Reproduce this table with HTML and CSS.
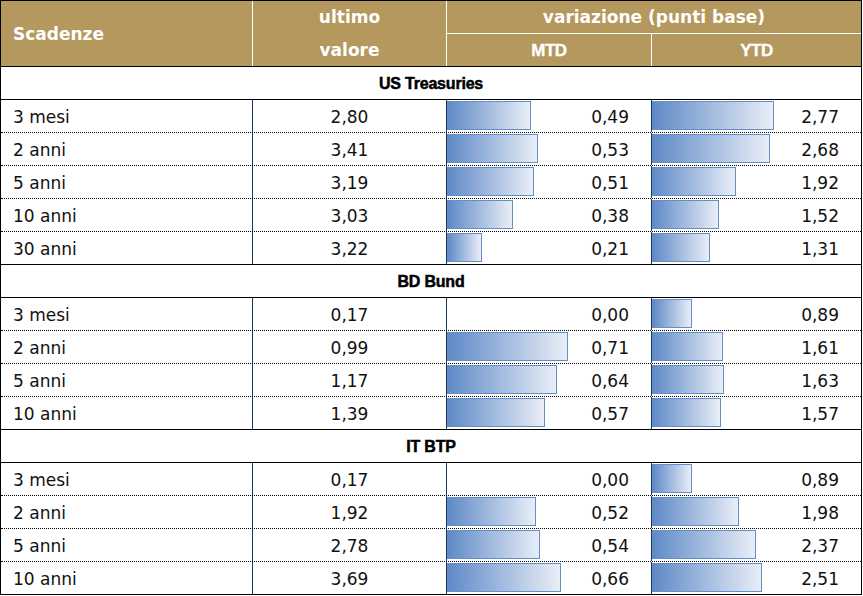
FILE: index.html
```html
<!DOCTYPE html>
<html lang="it">
<head>
<meta charset="utf-8">
<title>Scadenze</title>
<link rel="stylesheet" href="styles.css">
</head>
<body>
<div class="tbl">
  <div class="head">
    <div class="h h-scad">Scadenze</div>
    <div class="h h-ult"><span>ultimo</span><span>valore</span></div>
    <div class="h h-var">variazione (punti base)</div>
    <div class="h h-mtd">MTD</div>
    <div class="h h-ytd">YTD</div>
  </div>

  <div class="sec">US Treasuries</div>
  <div class="row"><div class="c name">3 mesi</div><div class="c val">2,80</div><div class="c bc"><span class="bar" style="width:84px"></span><span class="num">0,49</span></div><div class="c bc"><span class="bar" style="width:122px"></span><span class="num">2,77</span></div></div>
  <div class="row"><div class="c name">2 anni</div><div class="c val">3,41</div><div class="c bc"><span class="bar" style="width:91px"></span><span class="num">0,53</span></div><div class="c bc"><span class="bar" style="width:118px"></span><span class="num">2,68</span></div></div>
  <div class="row"><div class="c name">5 anni</div><div class="c val">3,19</div><div class="c bc"><span class="bar" style="width:87px"></span><span class="num">0,51</span></div><div class="c bc"><span class="bar" style="width:84px"></span><span class="num">1,92</span></div></div>
  <div class="row"><div class="c name">10 anni</div><div class="c val">3,03</div><div class="c bc"><span class="bar" style="width:66px"></span><span class="num">0,38</span></div><div class="c bc"><span class="bar" style="width:67px"></span><span class="num">1,52</span></div></div>
  <div class="row end"><div class="c name">30 anni</div><div class="c val">3,22</div><div class="c bc"><span class="bar" style="width:35px"></span><span class="num">0,21</span></div><div class="c bc"><span class="bar" style="width:58px"></span><span class="num">1,31</span></div></div>

  <div class="sec">BD Bund</div>
  <div class="row"><div class="c name">3 mesi</div><div class="c val">0,17</div><div class="c bc"><span class="num">0,00</span></div><div class="c bc"><span class="bar" style="width:40px"></span><span class="num">0,89</span></div></div>
  <div class="row"><div class="c name">2 anni</div><div class="c val">0,99</div><div class="c bc"><span class="bar" style="width:121px"></span><span class="num">0,71</span></div><div class="c bc"><span class="bar" style="width:71px"></span><span class="num">1,61</span></div></div>
  <div class="row"><div class="c name">5 anni</div><div class="c val">1,17</div><div class="c bc"><span class="bar" style="width:110px"></span><span class="num">0,64</span></div><div class="c bc"><span class="bar" style="width:72px"></span><span class="num">1,63</span></div></div>
  <div class="row end"><div class="c name">10 anni</div><div class="c val">1,39</div><div class="c bc"><span class="bar" style="width:98px"></span><span class="num">0,57</span></div><div class="c bc"><span class="bar" style="width:69px"></span><span class="num">1,57</span></div></div>

  <div class="sec">IT BTP</div>
  <div class="row"><div class="c name">3 mesi</div><div class="c val">0,17</div><div class="c bc"><span class="num">0,00</span></div><div class="c bc"><span class="bar" style="width:40px"></span><span class="num">0,89</span></div></div>
  <div class="row"><div class="c name">2 anni</div><div class="c val">1,92</div><div class="c bc"><span class="bar" style="width:89px"></span><span class="num">0,52</span></div><div class="c bc"><span class="bar" style="width:87px"></span><span class="num">1,98</span></div></div>
  <div class="row"><div class="c name">5 anni</div><div class="c val">2,78</div><div class="c bc"><span class="bar" style="width:93px"></span><span class="num">0,54</span></div><div class="c bc"><span class="bar" style="width:104px"></span><span class="num">2,37</span></div></div>
  <div class="row end"><div class="c name">10 anni</div><div class="c val">3,69</div><div class="c bc"><span class="bar" style="width:114px"></span><span class="num">0,66</span></div><div class="c bc"><span class="bar" style="width:110px"></span><span class="num">2,51</span></div></div>
</div>
</body>
</html>
```

FILE: styles.css
```css
html, body {
  margin: 0;
  padding: 0;
  background: #fff;
}

.tbl {
  width: 862px;
  box-sizing: border-box;
  border: 1px solid #000;
  border-bottom: none;
  font-family: "DejaVu Sans", sans-serif;
  font-size: 17px;
  color: #111;
}

.head {
  display: grid;
  grid-template-columns: 251px 193px 204px 209px;
  grid-template-rows: 32px 32px;
  gap: 1px;
  background: #fff;
  border-bottom: 1px solid #000;
}

.h {
  background: #b4985e;
  color: #fff;
  font-weight: bold;
  display: flex;
  align-items: center;
  justify-content: center;
}

.h-scad {
  grid-row: 1 / 3;
  grid-column: 1;
  justify-content: flex-start;
  padding-left: 12px;
}

.h-ult {
  grid-row: 1 / 3;
  grid-column: 2;
  flex-direction: column;
}

.h-ult span {
  line-height: 33px;
}

.h-var {
  grid-row: 1;
  grid-column: 3 / 5;
}

.h-mtd, .h-ytd {
  font-family: "Liberation Sans", Arial, sans-serif;
  font-size: 17px;
  letter-spacing: -0.5px;
  -webkit-text-stroke: 0.3px #fff;
  padding-top: 1px;
}

.h-mtd { grid-row: 2; grid-column: 3; }
.h-ytd { grid-row: 2; grid-column: 4; }

.sec {
  height: 33px;
  box-sizing: border-box;
  border-bottom: 1px solid #000;
  display: flex;
  align-items: center;
  justify-content: center;
  padding-top: 1px;
  font-family: "Liberation Sans", Arial, sans-serif;
  font-weight: bold;
  font-size: 16px;
  color: #000;
  letter-spacing: -0.2px;
  -webkit-text-stroke: 0.5px #000;
}

.row {
  display: grid;
  grid-template-columns: 251px 194px 205px 210px;
  height: 33px;
  box-sizing: border-box;
  border-bottom: 1px dotted #000;
}

.row.end {
  border-bottom: 1px solid #000;
}

.c {
  box-sizing: border-box;
  display: flex;
  align-items: center;
  border-left: 1px solid #17375e;
  padding-top: 1px;
}

.name {
  border-left: none;
  padding-left: 12px;
}

.val {
  justify-content: center;
}

.bc {
  padding-top: 0;
  padding-right: 22px;
}

.bc .num {
  padding-top: 1px;
}

.bar {
  align-self: flex-start;
  margin-top: 1px;
  height: 29px;
  box-sizing: border-box;
  border: 1px solid #638ec6;
  background: linear-gradient(to right, #5f8ac7, #e9eef7);
}

.num {
  margin-left: auto;
}
```
